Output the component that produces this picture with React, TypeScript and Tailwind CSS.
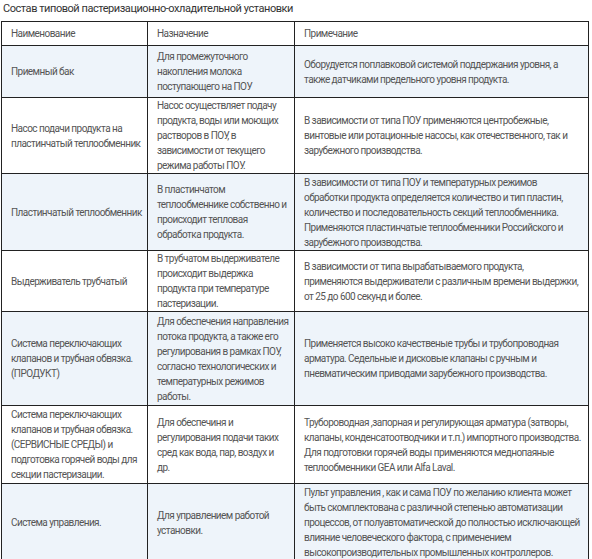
const rows = [
  {
    name: ["Приемный бак"],
    purpose: ["Для промежуточного", "накопления молока", "поступающего на ПОУ"],
    note: [
      "Оборудуется поплавковой системой поддержания уровня, а",
      "также датчиками предельного уровня продукта.",
    ],
  },
  {
    name: ["Насос подачи продукта на", "пластинчатый теплообменник"],
    purpose: ["Насос осуществляет подачу", "продукта, воды или моющих", "растворов в ПОУ, в", "зависимости от текущего", "режима работы ПОУ."],
    note: [
      "В зависимости от типа ПОУ применяются центробежные,",
      "винтовые или ротационные насосы, как отечественного, так и",
      "зарубежного производства.",
    ],
  },
  {
    name: ["Пластинчатый теплообменник"],
    purpose: ["В пластинчатом", "теплообменнике собственно и", "происходит тепловая", "обработка продукта."],
    note: [
      "В зависимости от типа ПОУ и температурных режимов",
      "обработки продукта определяется количество и тип пластин,",
      "количество и последовательность секций теплообменника.",
      "Применяются пластинчатые теплообменники Российского и",
      "зарубежного производства.",
    ],
  },
  {
    name: ["Выдерживатель трубчатый"],
    purpose: ["В трубчатом выдерживателе", "происходит выдержка", "продукта при температуре", "пастеризации."],
    note: [
      "В зависимости от типа вырабатываемого продукта,",
      "применяются выдерживатели с различным времени выдержки,",
      "от 25 до 600 секунд и более.",
    ],
  },
  {
    name: ["Система переключающих", "клапанов и трубная обвязка.", "(ПРОДУКТ)"],
    purpose: ["Для обеспечения направления", "потока продукта, а также его", "регулирования в рамках ПОУ,", "согласно технологических и", "температурных режимов", "работы."],
    note: [
      "Применяется высоко качественые трубы и трубопроводная",
      "арматура. Седельные и дисковые клапаны с ручным и",
      "пневматическим приводами зарубежного производства.",
    ],
  },
  {
    name: ["Система переключающих", "клапанов и трубная обвязка.", "(СЕРВИСНЫЕ СРЕДЫ) и", "подготовка горячей воды для", "секции пастеризации."],
    purpose: ["Для обеспечиня и", "регулирования подачи таких", "сред как вода, пар, воздух и", "др."],
    note: [
      "Трубороводная ,запорная и регулирующая арматура (затворы,",
      "клапаны, конденсатоотводчики и т.п.) импортного производства.",
      "Для подготовки горячей воды применяются меднопаяные",
      "теплообменники GEA или Alfa Laval.",
    ],
  },
  {
    name: ["Система управления."],
    purpose: ["Для управлением работой", "установки."],
    note: [
      "Пульт управления , как и сама ПОУ по желанию клиента может",
      "быть скомплектована с различной степенью автоматизации",
      "процессов, от полуавтоматической до полностью исключающей",
      "влияние человеческого фактора, с применением",
      "высокопроизводительных промышленных контроллеров.",
    ],
  },
];

const heights = ["h-[52px]", "h-[76px]", "h-[77px]", "h-[60px]", "h-[94px]", "h-[78px]", "h-[78px]"];

function Lines({ lines }: { lines: string[] }) {
  return (
    <>
      {lines.map((l) => (
        <div key={l} className="whitespace-nowrap">
          {l}
        </div>
      ))}
    </>
  );
}

export default function App() {
  return (
    <main className="w-[592px] h-[559px] overflow-hidden bg-white font-['Roboto',sans-serif]">
      <h1 className="pl-[3px] pt-[1px] h-[21px] text-[11px] leading-[16px] tracking-[-0.45px] text-[#333]">
        Состав типовой пастеризационно-охладительной установки
      </h1>
      <table className="ml-[1px] w-[587px] border-collapse table-fixed text-[10px] leading-[15px] tracking-[-0.55px] text-[#555]">
        <colgroup>
          <col className="w-[146px]" />
          <col className="w-[147px]" />
          <col className="w-[294px]" />
        </colgroup>
        <thead>
          <tr className="h-[24px] bg-white">
            <td className="border border-[#222] pl-[9px] pr-[2px] align-middle">Наименование</td>
            <td className="border border-[#222] pl-[9px] pr-[2px] align-middle">Назначение</td>
            <td className="border border-[#222] pl-[9px] pr-[2px] align-middle">Примечание</td>
          </tr>
        </thead>
        <tbody>
          {rows.map((row, i) => (
            <tr key={i} className={`${heights[i]} ${i % 2 === 0 ? "bg-[#eef4fa]" : "bg-white"}`}>
              <td className="border border-[#222] pl-[9px] pr-[2px] align-middle">
                <Lines lines={row.name} />
              </td>
              <td className="border border-[#222] pl-[9px] pr-[2px] align-middle">
                <Lines lines={row.purpose} />
              </td>
              <td className="border border-[#222] pl-[9px] pr-[2px] align-middle">
                <Lines lines={row.note} />
              </td>
            </tr>
          ))}
        </tbody>
      </table>
    </main>
  );
}
